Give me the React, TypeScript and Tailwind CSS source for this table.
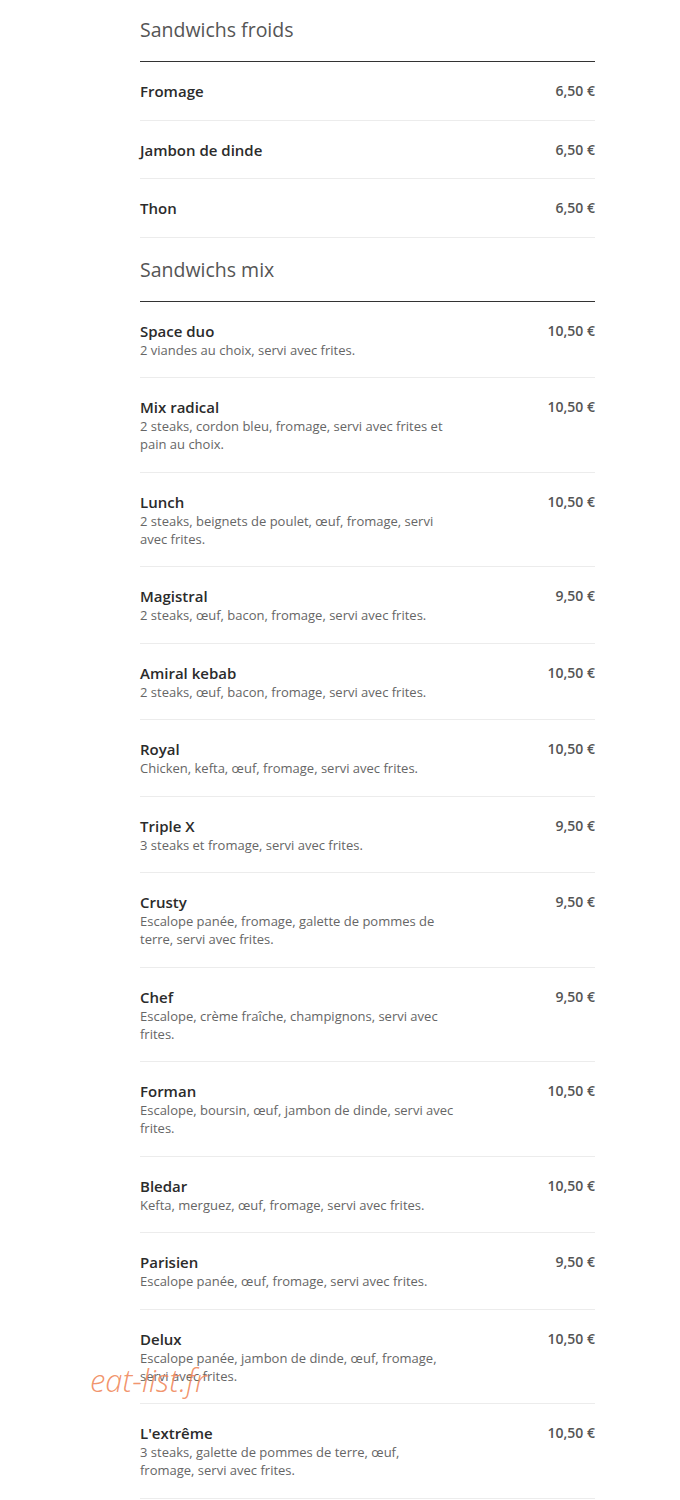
type Item = {
  name: string
  price: string
  desc?: string
}

const froids: Item[] = [
  { name: "Fromage", price: "6,50 €" },
  { name: "Jambon de dinde", price: "6,50 €" },
  { name: "Thon", price: "6,50 €" },
]

const mix: Item[] = [
  { name: "Space duo", price: "10,50 €", desc: "2 viandes au choix, servi avec frites." },
  { name: "Mix radical", price: "10,50 €", desc: "2 steaks, cordon bleu, fromage, servi avec frites et pain au choix." },
  { name: "Lunch", price: "10,50 €", desc: "2 steaks, beignets de poulet, œuf, fromage, servi avec frites." },
  { name: "Magistral", price: "9,50 €", desc: "2 steaks, œuf, bacon, fromage, servi avec frites." },
  { name: "Amiral kebab", price: "10,50 €", desc: "2 steaks, œuf, bacon, fromage, servi avec frites." },
  { name: "Royal", price: "10,50 €", desc: "Chicken, kefta, œuf, fromage, servi avec frites." },
  { name: "Triple X", price: "9,50 €", desc: "3 steaks et fromage, servi avec frites." },
  { name: "Crusty", price: "9,50 €", desc: "Escalope panée, fromage, galette de pommes de terre, servi avec frites." },
  { name: "Chef", price: "9,50 €", desc: "Escalope, crème fraîche, champignons, servi avec frites." },
  { name: "Forman", price: "10,50 €", desc: "Escalope, boursin, œuf, jambon de dinde, servi avec frites." },
  { name: "Bledar", price: "10,50 €", desc: "Kefta, merguez, œuf, fromage, servi avec frites." },
  { name: "Parisien", price: "9,50 €", desc: "Escalope panée, œuf, fromage, servi avec frites." },
  { name: "Delux", price: "10,50 €", desc: "Escalope panée, jambon de dinde, œuf, fromage, servi avec frites." },
  { name: "L'extrême", price: "10,50 €", desc: "3 steaks, galette de pommes de terre, œuf, fromage, servi avec frites." },
]

function MenuRow({ item }: { item: Item }) {
  return (
    <div className="flex items-start justify-between border-b border-[#ececec] pt-[19px] pb-[18.5px]">
      <div className="w-[315px]">
        <div className="text-[15px] font-semibold leading-[20px] text-[#2b2b2b]">{item.name}</div>
        {item.desc && (
          <div className="text-[13px] leading-[18px] text-[#666]">{item.desc}</div>
        )}
      </div>
      <div className="text-[14px] font-semibold leading-[20px] text-[#555]">{item.price}</div>
    </div>
  )
}

function Section({ title, items }: { title: string; items: Item[] }) {
  return (
    <section>
      <h2 className="pt-[19px] pb-[18px] text-[19.5px] leading-[26px] text-[#555] border-b border-[#333]">
        {title}
      </h2>
      {items.map((it) => (
        <MenuRow key={it.name} item={it} />
      ))}
    </section>
  )
}

export default function App() {
  return (
    <div
      className="relative min-h-[1500px] bg-white"
      style={{ fontFamily: '"Open Sans", "Liberation Sans", sans-serif' }}
    >
      <div className="ml-[140px] w-[455px] -mt-[2px]">
        <Section title="Sandwichs froids" items={froids} />
        <Section title="Sandwichs mix" items={mix} />
      </div>
      {/* watermark */}
      <div className="absolute left-[90px] top-[1363px] text-[31px] italic font-light leading-[38px] text-[#f0875a]/90">
        eat-list.fr
      </div>
    </div>
  )
}
